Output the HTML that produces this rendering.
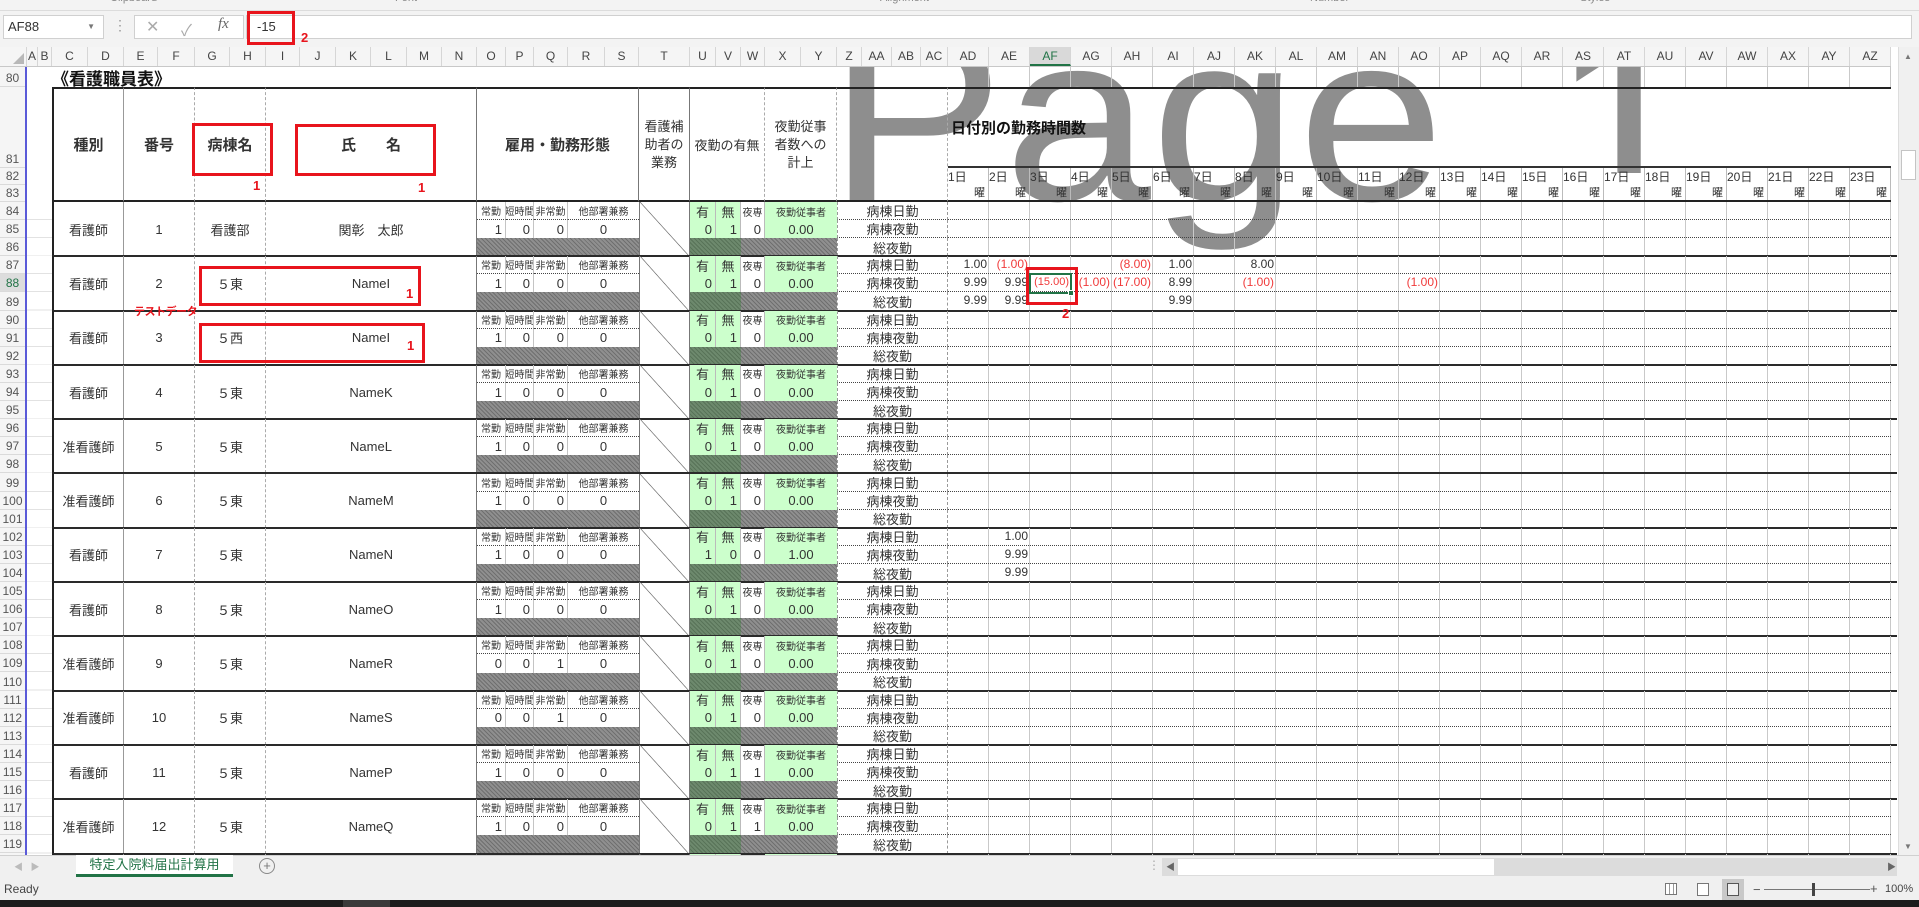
<!DOCTYPE html>
<html><head><meta charset="utf-8">
<style>
*{box-sizing:border-box;margin:0;padding:0}
body{width:1919px;height:907px;overflow:hidden;background:#fff;font-family:"Liberation Sans","Noto Sans CJK JP",sans-serif;color:#333;position:relative}
.abs{position:absolute}
:root{--cols:11px 14px 36px 36px 34px 37px 35px 36px 34px 36px 35px 36px 35px 35px 29px 28px 34px 37px 34px 51px 26px 25px 24px 36px 36px 25px 30px 29px 27px repeat(23,41px)}
#sheet{position:absolute;left:27px;top:67px;width:1870px;height:788px;overflow:hidden}
.grid{position:absolute;left:0;width:1870px;display:grid;grid-template-columns:var(--cols)}
.grid>div{display:flex;align-items:center;justify-content:center;white-space:nowrap;overflow:hidden;font-size:13px;position:relative}
.g{grid-template-rows:18.1px 18.1px 18.1px;height:54.3px}
.g::after{content:"";position:absolute;left:25px;right:0;bottom:-1px;height:2px;background:#2a2a2a}
.ab{grid-area:1/1/4/3;background:repeating-linear-gradient(180deg,transparent 0 17.1px,#e2e2e2 17.1px 18.1px)}
.k1{grid-area:1/3/4/5;border-left:2px solid #222;border-right:1px solid #999}
.k2{grid-area:1/5/4/7;border-right:1px dashed #aaa}
.k3{grid-area:1/7/4/9;border-right:1px dashed #aaa}
.k4{grid-area:1/9/4/15;border-right:1px solid #777}
.o1{grid-area:1/15/2/16}.p1{grid-area:1/16/2/17}.q1{grid-area:1/17/2/18}.r1{grid-area:1/18/2/20}
.o2{grid-area:2/15/3/16}.p2{grid-area:2/16/3/17}.q2{grid-area:2/17/3/18}.r2{grid-area:2/18/3/20}
.o1,.p1,.q1,.r1{border-bottom:1px dotted #444}
.o1,.p1,.q1,.o2,.p2,.q2{border-right:1px solid #c4c4c4}
.os3{grid-area:3/15/4/20}
.t{grid-area:1/20/4/21;border-right:1px solid #777;border-left:1px solid #777;background:linear-gradient(to top right,transparent calc(50% - .6px),#555 50%,transparent calc(50% + .6px))}
.u1{grid-area:1/21/2/22}.v1{grid-area:1/22/2/23}.w1{grid-area:1/23/2/24}.x1{grid-area:1/24/2/26}
.u2{grid-area:2/21/3/22}.v2{grid-area:2/22/3/23}.w2{grid-area:2/23/3/24}.x2{grid-area:2/24/3/26}
.u1,.v1,.w1,.u2,.v2,.w2{border-right:1px solid #bbb}
.uv3{grid-area:3/21/4/23}.wy3{grid-area:3/23/4/26}
.z1{grid-area:1/26/2/30}.z2{grid-area:2/26/3/30}.z3{grid-area:3/26/4/30}
.z1,.z2,.z3{border-left:1px dashed #999;border-right:1px dashed #999}
.d1{grid-area:1/30/2/53}.d2{grid-area:2/30/3/53}.d3{grid-area:3/30/4/53}
.z1,.z2,.d1,.d2{border-bottom:1px dotted #444}
.d1,.d2,.d3,.dl{background:repeating-linear-gradient(90deg,transparent 0 40px,#c9c9c9 40px 41px)}
.grid>.sm{font-size:10px}
.grid>.n{justify-content:flex-end;padding-right:3px}
.gr{background:#ccffcc}
.hat{background:repeating-linear-gradient(45deg,#6f6f6f 0 1px,#8f8f8f 1px 3px)}
.hg{background:repeating-linear-gradient(45deg,#587358 0 1px,#6d896d 1px 3px)}
.v{position:absolute;top:0;height:100%;width:39px;text-align:right;font-size:12px;line-height:17px}
.red{color:#f03a3a}
.h{grid-template-rows:20px 81px 17px 17px;top:0;height:135px}
.hb{border-top:2px solid #222;border-bottom:2px solid #222;font-weight:bold;font-size:15px!important}
.rh{position:absolute;left:0;top:67px;width:25px;background:#f5f5f5}
.rh div{display:flex;align-items:flex-end;justify-content:center;font-size:12px;color:#555;border-bottom:1px solid #dadada;padding-bottom:1px}
.ch{position:absolute;left:0;top:47px;height:20px;display:grid;grid-template-columns:27px var(--cols);background:#f5f5f5;border-bottom:1px solid #c8c8c8}
.ch div{font-size:12px;color:#444;text-align:center;line-height:19px;border-right:1px solid #d6d6d6;overflow:hidden}
.rbox{position:absolute;border:3px solid #e8141c}
.rn{position:absolute;color:#e8141c;font-weight:bold;font-size:13px}
.wm{font-size:240px;line-height:240px;color:#8e8e8e;transform:scaleX(1.1);transform-origin:0 0;white-space:nowrap}
</style></head><body>

<div class="abs" style="left:0;top:0;width:1919px;height:11px;background:#f3f3f3;border-bottom:1px solid #dcdcdc;overflow:hidden">
<span class="abs" style="left:110px;top:-8px;font-size:11px;color:#888">Clipboard</span>
<span class="abs" style="left:395px;top:-8px;font-size:11px;color:#888">Font</span>
<span class="abs" style="left:880px;top:-8px;font-size:11px;color:#888">Alignment</span>
<span class="abs" style="left:1310px;top:-8px;font-size:11px;color:#888">Number</span>
<span class="abs" style="left:1580px;top:-8px;font-size:11px;color:#888">Styles</span>
</div>
<div class="abs" style="left:0;top:11px;width:1919px;height:36px;background:#f3f3f3"></div>
<div class="abs" style="left:3px;top:15px;width:101px;height:24px;background:#fff;border:1px solid #d0d0d0;font-size:13px;line-height:22px;padding-left:4px">AF88<span class="abs" style="right:8px;top:0;font-size:8px;color:#777">▼</span></div>
<div class="abs" style="left:113px;top:17px;font-size:14px;color:#999">⋮</div>
<div class="abs" style="left:134px;top:15px;width:110px;height:24px;background:#fff;border:1px solid #d0d0d0"></div>
<div class="abs" style="left:146px;top:17px;font-size:16px;color:#aaa">✕</div>
<div class="abs" style="left:181px;top:17px;font-size:16px;color:#aaa">✓</div>
<div class="abs" style="left:218px;top:16px;font-size:15px;color:#666;font-style:italic;font-family:'Liberation Serif',serif">fx</div>
<div class="abs" style="left:246px;top:15px;width:1666px;height:24px;background:#fff;border:1px solid #d0d0d0;font-size:13px;line-height:22px;padding-left:10px">-15</div>

<div class="ch">
<div style="position:relative"><span class="abs" style="right:2px;bottom:2px;width:0;height:0;border-left:11px solid transparent;border-bottom:11px solid #b8b8b8"></span></div>
<div>A</div><div>B</div><div>C</div><div>D</div><div>E</div><div>F</div><div>G</div><div>H</div><div>I</div><div>J</div><div>K</div><div>L</div><div>M</div><div>N</div><div>O</div><div>P</div><div>Q</div><div>R</div><div>S</div><div>T</div><div>U</div><div>V</div><div>W</div><div>X</div><div>Y</div><div>Z</div><div>AA</div><div>AB</div><div>AC</div><div>AD</div><div>AE</div><div style="background:#d9d9d9;color:#217346;border-bottom:2px solid #217346">AF</div><div>AG</div><div>AH</div><div>AI</div><div>AJ</div><div>AK</div><div>AL</div><div>AM</div><div>AN</div><div>AO</div><div>AP</div><div>AQ</div><div>AR</div><div>AS</div><div>AT</div><div>AU</div><div>AV</div><div>AW</div><div>AX</div><div>AY</div><div>AZ</div>
</div>

<div class="rh">
<div style="height:20px">80</div><div style="height:81px">81</div><div style="height:17px">82</div><div style="height:17px">83</div>
<div style="height:18.1px">84</div><div style="height:18.1px">85</div><div style="height:18.1px">86</div><div style="height:18.1px">87</div><div style="height:18.1px;color:#217346;background:#ddd">88</div><div style="height:18.1px">89</div><div style="height:18.1px">90</div><div style="height:18.1px">91</div><div style="height:18.1px">92</div><div style="height:18.1px">93</div><div style="height:18.1px">94</div><div style="height:18.1px">95</div><div style="height:18.1px">96</div><div style="height:18.1px">97</div><div style="height:18.1px">98</div><div style="height:18.1px">99</div><div style="height:18.1px">100</div><div style="height:18.1px">101</div><div style="height:18.1px">102</div><div style="height:18.1px">103</div><div style="height:18.1px">104</div><div style="height:18.1px">105</div><div style="height:18.1px">106</div><div style="height:18.1px">107</div><div style="height:18.1px">108</div><div style="height:18.1px">109</div><div style="height:18.1px">110</div><div style="height:18.1px">111</div><div style="height:18.1px">112</div><div style="height:18.1px">113</div><div style="height:18.1px">114</div><div style="height:18.1px">115</div><div style="height:18.1px">116</div><div style="height:18.1px">117</div><div style="height:18.1px">118</div><div style="height:18.1px">119</div><div style="height:6px"></div>
</div>
<div class="abs" style="left:25px;top:67px;width:2px;height:788px;background:#5a5ad8"></div>

<div id="sheet">
<div class="abs wm" style="left:801px;top:-70px">Page</div>
<div class="abs" style="left:1524px;top:-70px;width:200px;height:176px;overflow:hidden"><div class="abs wm" style="left:0;top:0">1</div></div>

<div class="grid h">
<div style="grid-area:1/3/2/20;justify-content:flex-start;font-weight:bold;font-size:17px;color:#111">《看護職員表》</div>
<div class="dl" style="grid-area:1/30/2/53"></div>
<div class="hb" style="grid-area:2/3/5/5;border-left:2px solid #222;border-right:1px solid #999">種別</div>
<div class="hb" style="grid-area:2/5/5/7;border-right:1px dashed #aaa">番号</div>
<div class="hb" style="grid-area:2/7/5/9;border-right:1px dashed #aaa">病棟名</div>
<div class="hb" style="grid-area:2/9/5/15;border-right:1px solid #777">氏　　名</div>
<div class="hb" style="grid-area:2/15/5/20;border-right:1px solid #777">雇用・勤務形態</div>
<div class="hb" style="grid-area:2/20/5/21;border-right:1px solid #777;font-weight:normal;font-size:13px!important;line-height:18px;white-space:normal;text-align:center">看護補<br>助者の<br>業務</div>
<div class="hb" style="grid-area:2/21/5/24;border-right:1px dashed #aaa;font-weight:normal;font-size:13px!important">夜勤の有無</div>
<div class="hb" style="grid-area:2/24/5/26;border-right:1px dashed #aaa;font-weight:normal;font-size:13px!important;line-height:18px;white-space:normal;text-align:center">夜勤従事<br>者数への<br>計上</div>
<div class="hb" style="grid-area:2/26/5/30;border-right:1px dashed #aaa"></div>
<div style="grid-area:2/30/3/53;justify-content:flex-start;font-weight:bold;font-size:15px;border-top:2px solid #222;border-bottom:2px solid #333;color:#111;padding-left:3px">日付別の勤務時間数</div>
<div style="grid-area:3/30/4/53;background:repeating-linear-gradient(90deg,transparent 0 40px,#bbb 40px 41px)"></div>
<div style="grid-area:4/30/5/53;border-bottom:2px solid #222;background:repeating-linear-gradient(90deg,transparent 0 40px,#bbb 40px 41px)"></div>
</div>
<div class="abs" style="left:921px;top:101px;width:943px;height:17px;display:flex;font-size:12px">
<span style="width:41px">1日</span><span style="width:41px">2日</span><span style="width:41px">3日</span><span style="width:41px">4日</span><span style="width:41px">5日</span><span style="width:41px">6日</span><span style="width:41px">7日</span><span style="width:41px">8日</span><span style="width:41px">9日</span><span style="width:41px">10日</span><span style="width:41px">11日</span><span style="width:41px">12日</span><span style="width:41px">13日</span><span style="width:41px">14日</span><span style="width:41px">15日</span><span style="width:41px">16日</span><span style="width:41px">17日</span><span style="width:41px">18日</span><span style="width:41px">19日</span><span style="width:41px">20日</span><span style="width:41px">21日</span><span style="width:41px">22日</span><span style="width:41px">23日</span>
</div>
<div class="abs" style="left:921px;top:118px;width:943px;height:17px;display:flex;font-size:11px;line-height:17px">
<span style="width:41px;text-align:right;padding-right:4px">曜</span><span style="width:41px;text-align:right;padding-right:4px">曜</span><span style="width:41px;text-align:right;padding-right:4px">曜</span><span style="width:41px;text-align:right;padding-right:4px">曜</span><span style="width:41px;text-align:right;padding-right:4px">曜</span><span style="width:41px;text-align:right;padding-right:4px">曜</span><span style="width:41px;text-align:right;padding-right:4px">曜</span><span style="width:41px;text-align:right;padding-right:4px">曜</span><span style="width:41px;text-align:right;padding-right:4px">曜</span><span style="width:41px;text-align:right;padding-right:4px">曜</span><span style="width:41px;text-align:right;padding-right:4px">曜</span><span style="width:41px;text-align:right;padding-right:4px">曜</span><span style="width:41px;text-align:right;padding-right:4px">曜</span><span style="width:41px;text-align:right;padding-right:4px">曜</span><span style="width:41px;text-align:right;padding-right:4px">曜</span><span style="width:41px;text-align:right;padding-right:4px">曜</span><span style="width:41px;text-align:right;padding-right:4px">曜</span><span style="width:41px;text-align:right;padding-right:4px">曜</span><span style="width:41px;text-align:right;padding-right:4px">曜</span><span style="width:41px;text-align:right;padding-right:4px">曜</span><span style="width:41px;text-align:right;padding-right:4px">曜</span><span style="width:41px;text-align:right;padding-right:4px">曜</span><span style="width:41px;text-align:right;padding-right:4px">曜</span>
</div>

<div class="grid g" style="top:135px"><div class="ab"></div><div class="k1">看護師</div><div class="k2">1</div><div class="k3">看護部</div><div class="k4">関彰　太郎</div><div class="o1 sm">常勤</div><div class="p1 sm">短時間</div><div class="q1 sm">非常勤</div><div class="r1 sm">他部署兼務</div><div class="o2 n">1</div><div class="p2 n">0</div><div class="q2 n">0</div><div class="r2">0</div><div class="os3 hat"></div><div class="t"></div><div class="u1 gr">有</div><div class="v1 gr">無</div><div class="w1 sm">夜専</div><div class="x1 gr sm">夜勤従事者</div><div class="u2 gr n">0</div><div class="v2 gr n">1</div><div class="w2 n">0</div><div class="x2 gr">0.00</div><div class="uv3 hg"></div><div class="wy3 hat"></div><div class="z1">病棟日勤</div><div class="z2">病棟夜勤</div><div class="z3">総夜勤</div><div class="d1"></div><div class="d2"></div><div class="d3"></div></div>

<div class="grid g" style="top:189.3px"><div class="ab"></div><div class="k1">看護師</div><div class="k2">2</div><div class="k3">５東</div><div class="k4">NameI</div><div class="o1 sm">常勤</div><div class="p1 sm">短時間</div><div class="q1 sm">非常勤</div><div class="r1 sm">他部署兼務</div><div class="o2 n">1</div><div class="p2 n">0</div><div class="q2 n">0</div><div class="r2">0</div><div class="os3 hat"></div><div class="t"></div><div class="u1 gr">有</div><div class="v1 gr">無</div><div class="w1 sm">夜専</div><div class="x1 gr sm">夜勤従事者</div><div class="u2 gr n">0</div><div class="v2 gr n">1</div><div class="w2 n">0</div><div class="x2 gr">0.00</div><div class="uv3 hg"></div><div class="wy3 hat"></div><div class="z1">病棟日勤</div><div class="z2">病棟夜勤</div><div class="z3">総夜勤</div>
<div class="d1"><span class="v" style="left:0">1.00</span><span class="v red" style="left:41px">(1.00)</span><span class="v red" style="left:164px">(8.00)</span><span class="v" style="left:205px">1.00</span><span class="v" style="left:287px">8.00</span></div>
<div class="d2"><span class="v" style="left:0">9.99</span><span class="v" style="left:41px">9.99</span><span class="v red" style="left:82px;font-size:11px">(15.00)</span><span class="v red" style="left:123px">(1.00)</span><span class="v red" style="left:164px">(17.00)</span><span class="v" style="left:205px">8.99</span><span class="v red" style="left:287px">(1.00)</span><span class="v red" style="left:451px">(1.00)</span></div>
<div class="d3"><span class="v" style="left:0">9.99</span><span class="v" style="left:41px">9.99</span><span class="v" style="left:205px">9.99</span></div></div>

<div class="grid g" style="top:243.6px"><div class="ab"></div><div class="k1">看護師</div><div class="k2">3</div><div class="k3">５西</div><div class="k4">NameI</div><div class="o1 sm">常勤</div><div class="p1 sm">短時間</div><div class="q1 sm">非常勤</div><div class="r1 sm">他部署兼務</div><div class="o2 n">1</div><div class="p2 n">0</div><div class="q2 n">0</div><div class="r2">0</div><div class="os3 hat"></div><div class="t"></div><div class="u1 gr">有</div><div class="v1 gr">無</div><div class="w1 sm">夜専</div><div class="x1 gr sm">夜勤従事者</div><div class="u2 gr n">0</div><div class="v2 gr n">1</div><div class="w2 n">0</div><div class="x2 gr">0.00</div><div class="uv3 hg"></div><div class="wy3 hat"></div><div class="z1">病棟日勤</div><div class="z2">病棟夜勤</div><div class="z3">総夜勤</div><div class="d1"></div><div class="d2"></div><div class="d3"></div></div>

<div class="grid g" style="top:297.9px"><div class="ab"></div><div class="k1">看護師</div><div class="k2">4</div><div class="k3">５東</div><div class="k4">NameK</div><div class="o1 sm">常勤</div><div class="p1 sm">短時間</div><div class="q1 sm">非常勤</div><div class="r1 sm">他部署兼務</div><div class="o2 n">1</div><div class="p2 n">0</div><div class="q2 n">0</div><div class="r2">0</div><div class="os3 hat"></div><div class="t"></div><div class="u1 gr">有</div><div class="v1 gr">無</div><div class="w1 sm">夜専</div><div class="x1 gr sm">夜勤従事者</div><div class="u2 gr n">0</div><div class="v2 gr n">1</div><div class="w2 n">0</div><div class="x2 gr">0.00</div><div class="uv3 hg"></div><div class="wy3 hat"></div><div class="z1">病棟日勤</div><div class="z2">病棟夜勤</div><div class="z3">総夜勤</div><div class="d1"></div><div class="d2"></div><div class="d3"></div></div>

<div class="grid g" style="top:352.2px"><div class="ab"></div><div class="k1">准看護師</div><div class="k2">5</div><div class="k3">５東</div><div class="k4">NameL</div><div class="o1 sm">常勤</div><div class="p1 sm">短時間</div><div class="q1 sm">非常勤</div><div class="r1 sm">他部署兼務</div><div class="o2 n">1</div><div class="p2 n">0</div><div class="q2 n">0</div><div class="r2">0</div><div class="os3 hat"></div><div class="t"></div><div class="u1 gr">有</div><div class="v1 gr">無</div><div class="w1 sm">夜専</div><div class="x1 gr sm">夜勤従事者</div><div class="u2 gr n">0</div><div class="v2 gr n">1</div><div class="w2 n">0</div><div class="x2 gr">0.00</div><div class="uv3 hg"></div><div class="wy3 hat"></div><div class="z1">病棟日勤</div><div class="z2">病棟夜勤</div><div class="z3">総夜勤</div><div class="d1"></div><div class="d2"></div><div class="d3"></div></div>

<div class="grid g" style="top:406.5px"><div class="ab"></div><div class="k1">准看護師</div><div class="k2">6</div><div class="k3">５東</div><div class="k4">NameM</div><div class="o1 sm">常勤</div><div class="p1 sm">短時間</div><div class="q1 sm">非常勤</div><div class="r1 sm">他部署兼務</div><div class="o2 n">1</div><div class="p2 n">0</div><div class="q2 n">0</div><div class="r2">0</div><div class="os3 hat"></div><div class="t"></div><div class="u1 gr">有</div><div class="v1 gr">無</div><div class="w1 sm">夜専</div><div class="x1 gr sm">夜勤従事者</div><div class="u2 gr n">0</div><div class="v2 gr n">1</div><div class="w2 n">0</div><div class="x2 gr">0.00</div><div class="uv3 hg"></div><div class="wy3 hat"></div><div class="z1">病棟日勤</div><div class="z2">病棟夜勤</div><div class="z3">総夜勤</div><div class="d1"></div><div class="d2"></div><div class="d3"></div></div>

<div class="grid g" style="top:460.8px"><div class="ab"></div><div class="k1">看護師</div><div class="k2">7</div><div class="k3">５東</div><div class="k4">NameN</div><div class="o1 sm">常勤</div><div class="p1 sm">短時間</div><div class="q1 sm">非常勤</div><div class="r1 sm">他部署兼務</div><div class="o2 n">1</div><div class="p2 n">0</div><div class="q2 n">0</div><div class="r2">0</div><div class="os3 hat"></div><div class="t"></div><div class="u1 gr">有</div><div class="v1 gr">無</div><div class="w1 sm">夜専</div><div class="x1 gr sm">夜勤従事者</div><div class="u2 gr n">1</div><div class="v2 gr n">0</div><div class="w2 n">0</div><div class="x2 gr">1.00</div><div class="uv3 hg"></div><div class="wy3 hat"></div><div class="z1">病棟日勤</div><div class="z2">病棟夜勤</div><div class="z3">総夜勤</div><div class="d1"><span class="v" style="left:41px">1.00</span></div><div class="d2"><span class="v" style="left:41px">9.99</span></div><div class="d3"><span class="v" style="left:41px">9.99</span></div></div>

<div class="grid g" style="top:515.1px"><div class="ab"></div><div class="k1">看護師</div><div class="k2">8</div><div class="k3">５東</div><div class="k4">NameO</div><div class="o1 sm">常勤</div><div class="p1 sm">短時間</div><div class="q1 sm">非常勤</div><div class="r1 sm">他部署兼務</div><div class="o2 n">1</div><div class="p2 n">0</div><div class="q2 n">0</div><div class="r2">0</div><div class="os3 hat"></div><div class="t"></div><div class="u1 gr">有</div><div class="v1 gr">無</div><div class="w1 sm">夜専</div><div class="x1 gr sm">夜勤従事者</div><div class="u2 gr n">0</div><div class="v2 gr n">1</div><div class="w2 n">0</div><div class="x2 gr">0.00</div><div class="uv3 hg"></div><div class="wy3 hat"></div><div class="z1">病棟日勤</div><div class="z2">病棟夜勤</div><div class="z3">総夜勤</div><div class="d1"></div><div class="d2"></div><div class="d3"></div></div>

<div class="grid g" style="top:569.4px"><div class="ab"></div><div class="k1">准看護師</div><div class="k2">9</div><div class="k3">５東</div><div class="k4">NameR</div><div class="o1 sm">常勤</div><div class="p1 sm">短時間</div><div class="q1 sm">非常勤</div><div class="r1 sm">他部署兼務</div><div class="o2 n">0</div><div class="p2 n">0</div><div class="q2 n">1</div><div class="r2">0</div><div class="os3 hat"></div><div class="t"></div><div class="u1 gr">有</div><div class="v1 gr">無</div><div class="w1 sm">夜専</div><div class="x1 gr sm">夜勤従事者</div><div class="u2 gr n">0</div><div class="v2 gr n">1</div><div class="w2 n">0</div><div class="x2 gr">0.00</div><div class="uv3 hg"></div><div class="wy3 hat"></div><div class="z1">病棟日勤</div><div class="z2">病棟夜勤</div><div class="z3">総夜勤</div><div class="d1"></div><div class="d2"></div><div class="d3"></div></div>

<div class="grid g" style="top:623.7px"><div class="ab"></div><div class="k1">准看護師</div><div class="k2">10</div><div class="k3">５東</div><div class="k4">NameS</div><div class="o1 sm">常勤</div><div class="p1 sm">短時間</div><div class="q1 sm">非常勤</div><div class="r1 sm">他部署兼務</div><div class="o2 n">0</div><div class="p2 n">0</div><div class="q2 n">1</div><div class="r2">0</div><div class="os3 hat"></div><div class="t"></div><div class="u1 gr">有</div><div class="v1 gr">無</div><div class="w1 sm">夜専</div><div class="x1 gr sm">夜勤従事者</div><div class="u2 gr n">0</div><div class="v2 gr n">1</div><div class="w2 n">0</div><div class="x2 gr">0.00</div><div class="uv3 hg"></div><div class="wy3 hat"></div><div class="z1">病棟日勤</div><div class="z2">病棟夜勤</div><div class="z3">総夜勤</div><div class="d1"></div><div class="d2"></div><div class="d3"></div></div>

<div class="grid g" style="top:678px"><div class="ab"></div><div class="k1">看護師</div><div class="k2">11</div><div class="k3">５東</div><div class="k4">NameP</div><div class="o1 sm">常勤</div><div class="p1 sm">短時間</div><div class="q1 sm">非常勤</div><div class="r1 sm">他部署兼務</div><div class="o2 n">1</div><div class="p2 n">0</div><div class="q2 n">0</div><div class="r2">0</div><div class="os3 hat"></div><div class="t"></div><div class="u1 gr">有</div><div class="v1 gr">無</div><div class="w1 sm">夜専</div><div class="x1 gr sm">夜勤従事者</div><div class="u2 gr n">0</div><div class="v2 gr n">1</div><div class="w2 n">1</div><div class="x2 gr">0.00</div><div class="uv3 hg"></div><div class="wy3 hat"></div><div class="z1">病棟日勤</div><div class="z2">病棟夜勤</div><div class="z3">総夜勤</div><div class="d1"></div><div class="d2"></div><div class="d3"></div></div>

<div class="grid g" style="top:732.3px"><div class="ab"></div><div class="k1">准看護師</div><div class="k2">12</div><div class="k3">５東</div><div class="k4">NameQ</div><div class="o1 sm">常勤</div><div class="p1 sm">短時間</div><div class="q1 sm">非常勤</div><div class="r1 sm">他部署兼務</div><div class="o2 n">1</div><div class="p2 n">0</div><div class="q2 n">0</div><div class="r2">0</div><div class="os3 hat"></div><div class="t"></div><div class="u1 gr">有</div><div class="v1 gr">無</div><div class="w1 sm">夜専</div><div class="x1 gr sm">夜勤従事者</div><div class="u2 gr n">0</div><div class="v2 gr n">1</div><div class="w2 n">1</div><div class="x2 gr">0.00</div><div class="uv3 hg"></div><div class="wy3 hat"></div><div class="z1">病棟日勤</div><div class="z2">病棟夜勤</div><div class="z3">総夜勤</div><div class="d1"></div><div class="d2"></div><div class="d3"></div></div>

<div class="grid g" style="top:786.6px"><div class="ab"></div><div class="k1"></div><div class="k2"></div><div class="k3"></div><div class="k4"></div><div class="t"></div><div class="u1 gr"></div><div class="v1 gr"></div><div class="x1 gr"></div><div class="d1"></div></div>
</div>

<div class="abs" style="left:1029px;top:273px;width:43px;height:21px;border:2px solid #217346"><span class="abs" style="right:-4px;bottom:-4px;width:6px;height:6px;background:#217346;border:1px solid #fff"></span></div>

<div class="rbox" style="left:192px;top:123px;width:81px;height:53px"></div>
<div class="rn" style="left:253px;top:178px">1</div>
<div class="rbox" style="left:295px;top:124px;width:141px;height:52px"></div>
<div class="rn" style="left:418px;top:180px">1</div>
<div class="rbox" style="left:247px;top:11px;width:48px;height:34px"></div>
<div class="rn" style="left:301px;top:30px">2</div>
<div class="rbox" style="left:199px;top:266px;width:222px;height:40px"></div>
<div class="rn" style="left:406px;top:286px">1</div>
<div class="rbox" style="left:199px;top:323px;width:226px;height:40px"></div>
<div class="rn" style="left:407px;top:338px">1</div>
<div class="abs" style="left:134px;top:303px;font-size:11px;font-weight:bold;color:#e8141c;letter-spacing:-0.5px">テストデータ</div>
<div class="rbox" style="left:1026px;top:267px;width:52px;height:38px"></div>
<div class="rn" style="left:1062px;top:306px">2</div>

<div class="abs" style="left:1898px;top:47px;width:21px;height:808px;background:#f0f0f0;border-left:1px solid #ddd"></div>
<div class="abs" style="left:1904px;top:52px;font-size:8px;color:#777">▲</div>
<div class="abs" style="left:1901px;top:150px;width:15px;height:30px;background:#fff;border:1px solid #c4c4c4"></div>
<div class="abs" style="left:1904px;top:842px;font-size:8px;color:#777">▼</div>

<div class="abs" style="left:0;top:855px;width:1919px;height:24px;background:#f0f0f0;border-top:1px solid #d0d0d0"></div>
<div class="abs" style="left:14px;top:860px;font-size:9px;color:#bbb">◀&nbsp;&nbsp;&nbsp;▶</div>
<div class="abs" style="left:76px;top:855px;width:157px;height:22px;background:#fff;border-bottom:3px solid #217346;font-size:13px;color:#217346;text-align:center;line-height:20px">特定入院料届出計算用</div>
<div class="abs" style="left:259px;top:858px;width:16px;height:16px;border:1px solid #888;border-radius:50%;font-size:13px;line-height:13px;text-align:center;color:#777">+</div>
<div class="abs" style="left:1148px;top:858px;font-size:12px;color:#aaa">⋮</div>
<div class="abs" style="left:1162px;top:858px;width:735px;height:18px;background:#dcdcdc"></div>
<div class="abs" style="left:1166px;top:860px;font-size:9px;color:#666">◀</div>
<div class="abs" style="left:1178px;top:859px;width:316px;height:16px;background:#fff"></div>
<div class="abs" style="left:1887px;top:860px;font-size:9px;color:#666">▶</div>

<div class="abs" style="left:0;top:879px;width:1919px;height:21px;background:#f0f0f0"></div>
<div class="abs" style="left:4px;top:882px;font-size:12px;color:#444">Ready</div>
<div class="abs" style="left:1665px;top:883px;width:12px;height:12px;border:1px solid #777;background:repeating-linear-gradient(90deg,#fff 0 3px,#999 3px 4px)"></div>
<div class="abs" style="left:1697px;top:883px;width:12px;height:13px;border:1px solid #777;background:#fff"></div>
<div class="abs" style="left:1722px;top:879px;width:22px;height:21px;background:#c8c8c8"></div>
<div class="abs" style="left:1727px;top:883px;width:12px;height:13px;border:1px solid #555;background:#eee"></div>
<div class="abs" style="left:1753px;top:882px;font-size:13px;color:#555">−</div>
<div class="abs" style="left:1764px;top:889px;width:106px;height:1px;background:#777"></div>
<div class="abs" style="left:1812px;top:883px;width:3px;height:13px;background:#444"></div>
<div class="abs" style="left:1870px;top:881px;font-size:13px;color:#555">+</div>
<div class="abs" style="left:1885px;top:883px;font-size:11px;color:#444">100%</div>

<div class="abs" style="left:0;top:900px;width:1919px;height:7px;background:#1c1c1c"></div>
<div class="abs" style="left:343px;top:900px;width:47px;height:7px;background:#3a3a3a"></div>
</body></html>
